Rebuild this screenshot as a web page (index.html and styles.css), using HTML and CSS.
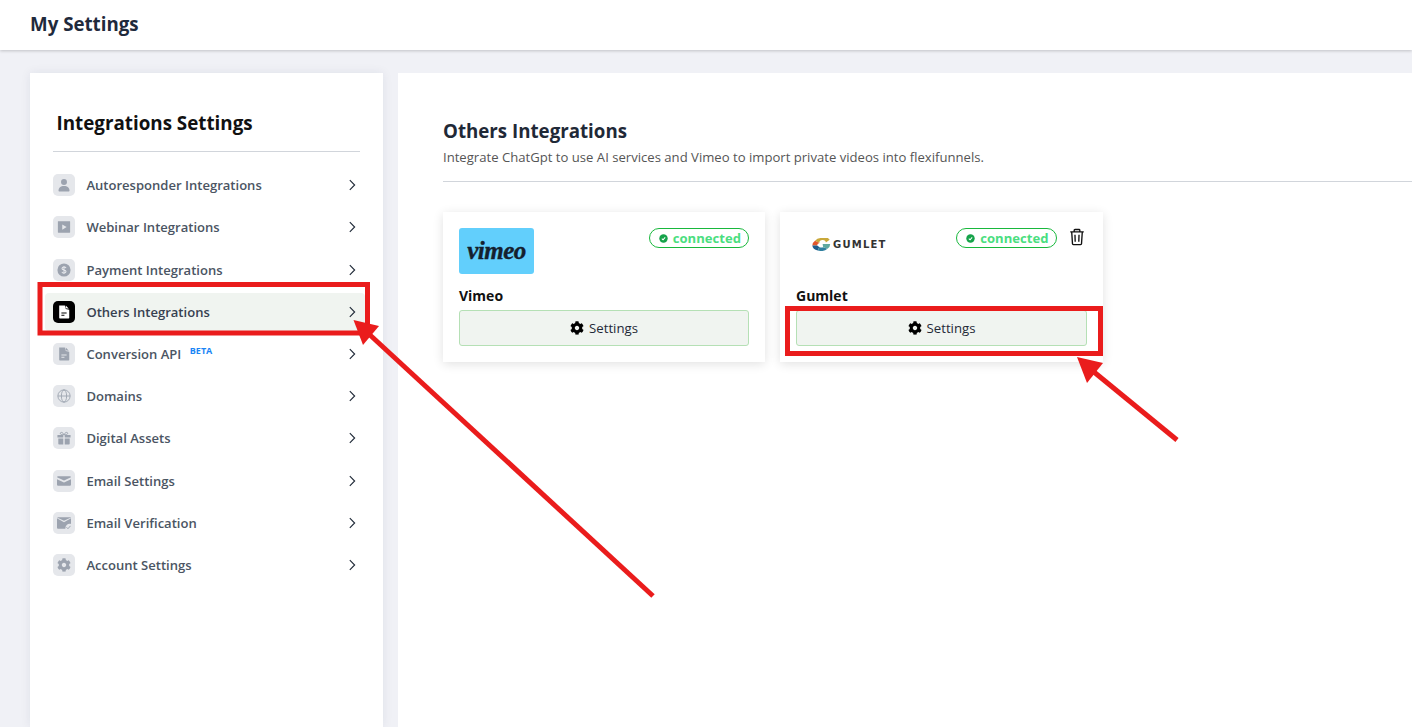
FILE: index.html
```html
<!DOCTYPE html>
<html lang="en">
<head>
    <meta charset="UTF-8">
    <title>My Settings</title>
    <link rel="stylesheet" href="styles.css">
</head>
<body>
<svg class="defs" width="0" height="0">
    <symbol id="gear" viewBox="0 0 512 512"><path d="M487.4 315.7l-42.6-24.6c4.3-23.2 4.3-47 0-70.2l42.6-24.6c4.9-2.8 7.1-8.6 5.5-14-11.1-35.6-30-67.8-54.7-94.6-3.8-4.1-10-5.1-14.8-2.3L380.8 110c-17.9-15.4-38.5-27.3-60.8-35.1V25.8c0-5.6-3.9-10.5-9.4-11.7-36.7-8.2-74.3-7.8-109.2 0-5.5 1.2-9.4 6.1-9.4 11.7V75c-22.2 7.9-42.8 19.8-60.8 35.1L88.7 85.5c-4.9-2.8-11-1.9-14.8 2.3-24.7 26.7-43.6 58.9-54.7 94.6-1.7 5.4.6 11.2 5.5 14L67.3 221c-4.3 23.2-4.3 47 0 70.2l-42.6 24.6c-4.9 2.8-7.1 8.6-5.5 14 11.1 35.6 30 67.8 54.7 94.6 3.8 4.1 10 5.1 14.8 2.3l42.6-24.6c17.9 15.4 38.5 27.3 60.8 35.1v49.2c0 5.6 3.9 10.5 9.4 11.7 36.7 8.2 74.3 7.8 109.2 0 5.5-1.2 9.4-6.1 9.4-11.7v-49.2c22.2-7.9 42.8-19.8 60.8-35.1l42.6 24.6c4.9 2.8 11 1.9 14.8-2.3 24.7-26.7 43.6-58.9 54.7-94.6 1.5-5.5-.7-11.3-5.6-14.1zM256 336c-44.1 0-80-35.9-80-80s35.9-80 80-80 80 35.9 80 80-35.9 80-80 80z"/></symbol>
    <symbol id="doc" viewBox="0 0 16 16"><path d="M2.500 0.500h6.500l1 4 4 1v9c0 .5-.3.8-.8.8H3.300c-.5 0-.8-.3-.8-.8zM10 .7l3.500 3.500-3.500-.5zM5 8.500v1.200h6V8.500zM5 11.200v1.200h3.500v-1.200z" fill-rule="evenodd"/></symbol>
    <symbol id="chev" viewBox="0 0 16 16"><path d="M5.500 2.500 11 8l-5.500 5.500" fill="none" stroke="currentColor" stroke-width="1.300"/></symbol>
    <symbol id="check" viewBox="0 0 16 16"><circle cx="8" cy="8" r="7.500" fill="#16a34a"/><path d="M5 8.200 7.200 10.300 11 6" fill="none" stroke="#fff" stroke-width="1.800"/></symbol>
</svg>

<header class="topbar">My Settings</header>

<div class="page">
    <aside class="sidebar">
        <h2 class="side-title">Integrations Settings</h2>
        <ul class="side-list">
            <li class="side-item">
                <span class="side-icon"><svg viewBox="0 0 16 16"><circle cx="8" cy="4.500" r="3.400"/><path d="M2.500 15.500c-.5 0-.8-.3-.8-.8C1.700 11 4 9 8 9s6.300 2 6.300 5.700c0 .5-.3.8-.8.8z"/></svg></span>
                <span class="side-label">Autoresponder Integrations</span>
                <svg class="chevron"><use href="#chev"/></svg>
            </li>
            <li class="side-item">
                <span class="side-icon"><svg viewBox="0 0 16 16"><path d="M1.500 1.500h13c.3 0 .5.2.5.5v12c0 .3-.2.5-.5.5h-13c-.3 0-.5-.2-.5-.5V2c0-.3.2-.5.500-.5zM6 5v6l5-3z" fill-rule="evenodd"/></svg></span>
                <span class="side-label">Webinar Integrations</span>
                <svg class="chevron"><use href="#chev"/></svg>
            </li>
            <li class="side-item">
                <span class="side-icon"><svg viewBox="0 0 16 16"><circle cx="8" cy="8" r="7.500"/><path d="M10.300 5.800C10 4.900 9.100 4.500 8 4.500c-1.300 0-2.300.6-2.300 1.700 0 2.300 4.600 1.200 4.600 3.500 0 1.100-1 1.800-2.300 1.800-1.200 0-2.100-.5-2.400-1.400M8 3.300v9.400" fill="none" stroke="#e5e7eb" stroke-width="1.200"/></svg></span>
                <span class="side-label">Payment Integrations</span>
                <svg class="chevron"><use href="#chev"/></svg>
            </li>
            <li class="side-item active">
                <span class="side-icon"><svg><use href="#doc"/></svg></span>
                <span class="side-label">Others Integrations</span>
                <svg class="chevron"><use href="#chev"/></svg>
            </li>
            <li class="side-item">
                <span class="side-icon"><svg><use href="#doc"/></svg></span>
                <span class="side-label">Conversion API</span>
                <sup class="beta">BETA</sup>
                <svg class="chevron"><use href="#chev"/></svg>
            </li>
            <li class="side-item">
                <span class="side-icon"><svg viewBox="0 0 16 16" class="line-icon"><circle cx="8" cy="8" r="7"/><ellipse cx="8" cy="8" rx="3" ry="7"/><path d="M1 8h14"/></svg></span>
                <span class="side-label">Domains</span>
                <svg class="chevron"><use href="#chev"/></svg>
            </li>
            <li class="side-item">
                <span class="side-icon"><svg viewBox="0 0 16 16"><path d="M.5 4.500h6.700v3H.5zM8.800 4.500h6.700v3H8.800zM1.500 8.500h5.700v7H2.300c-.5 0-.8-.3-.8-.8zM8.800 8.500h5.700v6.200c0 .5-.3.8-.8.8H8.800z"/><path d="M8 4.200C6.500 1 3.800 1 3.800 2.800 3.800 4 6 4.200 8 4.200c2 0 4.200-.2 4.200-1.400C12.200 1 9.500 1 8 4.200z" fill="none" stroke="#9ca3af" stroke-width="1.100"/></svg></span>
                <span class="side-label">Digital Assets</span>
                <svg class="chevron"><use href="#chev"/></svg>
            </li>
            <li class="side-item">
                <span class="side-icon"><svg viewBox="0 0 16 16"><path d="M1.500 2.500h13c.8 0 1.500.6 1.500 1.300L8 7.500 0 3.800c0-.7.700-1.300 1.500-1.300zM0 6l8 3.700L16 6v6c0 .8-.7 1.500-1.500 1.500h-13C.7 13.500 0 12.800 0 12z"/></svg></span>
                <span class="side-label">Email Settings</span>
                <svg class="chevron"><use href="#chev"/></svg>
            </li>
            <li class="side-item">
                <span class="side-icon"><svg viewBox="0 0 16 16"><path d="M1 1.500h14c.5 0 1 .4 1 1v6.700c-2.800-1-6.500.8-6.500 5.300H1c-.5 0-1-.4-1-1V2.500L8 7l8-4.500-.5-.5L8 5.500.5 2C.5 1.700.5 1.500 1 1.500z"/><path d="M10.800 12.800 12.500 14.500l3-3.300" fill="none" stroke="#9ca3af" stroke-width="1.100"/></svg></span>
                <span class="side-label">Email Verification</span>
                <svg class="chevron"><use href="#chev"/></svg>
            </li>
            <li class="side-item">
                <span class="side-icon"><svg><use href="#gear"/></svg></span>
                <span class="side-label">Account Settings</span>
                <svg class="chevron"><use href="#chev"/></svg>
            </li>
        </ul>
    </aside>

    <main class="content">
        <h3 class="content-title">Others Integrations</h3>
        <p class="content-sub">Integrate ChatGpt to use AI services and Vimeo to import private videos into flexifunnels.</p>
        <div class="cards">
            <section class="card">
                <div class="card-top">
                    <div class="logo vimeo"><span>vimeo</span></div>
                    <span class="badge"><svg><use href="#check"/></svg>connected</span>
                </div>
                <div class="card-name">Vimeo</div>
                <button class="btn"><svg><use href="#gear"/></svg>Settings</button>
            </section>
            <section class="card">
                <div class="card-top">
                    <div class="logo gumlet">
                        <svg viewBox="0 0 18 12">
                            <path d="M17 1.600A6.500 6.500 0 0 0 9 0 6.500 6 0 0 0 3.500 2.500L7.500 4.500A3 2.500 0 0 1 13.500 4.200z" fill="#c9a83a"/>
                            <path d="M3.500 2.500A6 5.500 0 0 0 1 7L5.500 7A3.500 2.500 0 0 1 7.500 4.500z" fill="#e2562b"/>
                            <path d="M1 7A6.500 5 0 0 0 6 11.500L7.500 8.300A3.500 2.500 0 0 1 5.500 7z" fill="#1f5d8c"/>
                            <path d="M6 11.500A8 6 0 0 0 15 10L11 8.500A3.500 2.500 0 0 1 7.500 8.300z" fill="#2f7f9f"/>
                            <path d="M15 10A7 6 0 0 0 17.500 5.500H10.500L11 8.500z" fill="#5fa8a0"/>
                        </svg>
                        <span>GUMLET</span>
                    </div>
                    <span class="badge"><svg><use href="#check"/></svg>connected</span>
                    <svg class="trash" viewBox="0 0 16 16"><path d="M2 3.500h12M5.500 3.500V2c0-.4.3-.7.7-.7h3.600c.4 0 .7.3.7.7v1.500M3.300 3.500l.7 10.600c0 .4.4.7.8.7h6.400c.4 0 .8-.3.8-.7l.7-10.600M6.200 6l.2 6.300M9.800 6l-.2 6.300" fill="none" stroke="#111" stroke-width="1.200"/></svg>
                </div>
                <div class="card-name">Gumlet</div>
                <button class="btn"><svg><use href="#gear"/></svg>Settings</button>
            </section>
        </div>
    </main>
</div>

<!-- red annotations drawn over the screenshot -->
<svg class="marks" viewBox="0 0 1412 727">
    <rect x="40" y="284.500" width="327.500" height="48.500"/>
    <rect x="787.500" y="308.500" width="313" height="45"/>
    <path d="M653 596 370 335"/>
    <path d="M1177 440 1094 372"/>
    <polygon points="353.500,320 379,326 363,345"/>
    <polygon points="1077,357 1103,363 1087,383"/>
</svg>
</body>
</html>
```

FILE: styles.css
```css
* {
    margin: 0;
    padding: 0;
    box-sizing: border-box;
}

html, body {
    height: 100%;
    overflow: hidden;
}

body {
    font-family: "Open Sans", "Liberation Sans", sans-serif;
    background: #f0f1f6;
    color: #111827;
}

.defs {
    position: absolute;
}

.topbar {
    height: 50px;
    padding: 0 30px;
    font-size: 18.720px;
    font-weight: 700;
    line-height: 48px;
    color: #1f2a3c;
    background: #fff;
    box-shadow: 0 1px 3px rgba(0, 0, 0, .2);
}

.page {
    display: flex;
    gap: 15px;
    height: 677px;
    padding: 23px 0 0 30px;
}

.sidebar {
    flex: none;
    width: 353px;
    padding: 36px 23px 0 15px;
    background: #fff;
    box-shadow: 0 0 10px rgba(30, 40, 80, .08);
}

.side-title {
    margin-left: 11.500px;
    padding-bottom: 14px;
    font-size: 18.800px;
    font-weight: 700;
    line-height: 28px;
    color: #111;
}

.side-list {
    position: relative;
    list-style: none;
    margin: 0 -5px 0 0;
    padding-top: 15.080px;
}

.side-list::before {
    content: "";
    position: absolute;
    top: 0;
    left: 8px;
    right: 5px;
    height: 1px;
    background: #d1d5db;
}

.side-item {
    display: flex;
    align-items: center;
    height: 38px;
    margin-bottom: 4.220px;
    padding-left: 8px;
    border-radius: 4px;
    font-size: 13.060px;
    font-weight: 600;
    color: #4b5563;
}

.side-item.active {
    background: #f0f4f0;
    color: #374151;
}

.side-icon {
    display: flex;
    align-items: center;
    justify-content: center;
    flex: none;
    width: 22px;
    height: 22px;
    margin-right: 11.400px;
    border-radius: 5px;
    background: #e5e7eb;
}

.side-icon svg {
    width: 14px;
    height: 14px;
    fill: #9ca3af;
}

.side-icon .line-icon {
    fill: none;
    stroke: #9ca3af;
    stroke-width: 1;
}

.active .side-icon {
    background: #000;
}

.active .side-icon svg {
    fill: #fff;
}

.beta {
    margin: -6px 0 0 8.500px;
    font-size: 9px;
    font-weight: 700;
    line-height: 1;
    color: #1a85f5;
}

.chevron {
    width: 14px;
    height: 14px;
    margin-left: auto;
    margin-right: 6px;
    color: #1f2937;
}

.content {
    flex: 1;
    padding: 45px 0 0 45px;
    background: #fff;
}

.content-title {
    font-size: 18.720px;
    font-weight: 700;
    line-height: 25px;
    color: #1f2937;
}

.content-sub {
    padding: 5px 0 15px;
    border-bottom: 1px solid #d1d5db;
    font-size: 13.120px;
    line-height: 18px;
    color: #555;
}

.cards {
    display: grid;
    grid-template-columns: 322px 323px;
    gap: 15px;
    padding-top: 30px;
}

.card {
    height: 150px;
    padding: 16px;
    background: #fff;
    box-shadow: 0 2px 10px rgba(0, 0, 0, .12);
}

.card-top {
    display: flex;
    align-items: flex-start;
    height: 46px;
}

.logo {
    display: flex;
    align-items: center;
    justify-content: center;
    width: 75px;
    height: 46px;
    border-radius: 3px;
}

.vimeo {
    background: #62cffc;
}

.vimeo span {
    font-family: "Liberation Serif", serif;
    font-size: 25px;
    font-style: italic;
    font-weight: 700;
    letter-spacing: -.5px;
    color: #14202e;
    -webkit-text-stroke: .4px #14202e;
}

.gumlet {
    justify-content: flex-start;
    gap: 2px;
    width: 100px;
    height: 32px;
    padding-left: 15px;
}

.gumlet svg {
    flex: none;
    width: 20px;
    height: 13px;
}

.gumlet span {
    font-family: "DejaVu Sans", sans-serif;
    font-size: 10px;
    font-weight: 700;
    letter-spacing: 1.200px;
    color: #333;
}

.badge {
    display: flex;
    align-items: center;
    gap: 5px;
    height: 20px;
    margin-left: auto;
    padding: 0 7px 0 9px;
    border: 1px solid #18b83c;
    border-radius: 10px;
    font-size: 13.100px;
    font-weight: 700;
    color: #4ade80;
}

.badge svg {
    width: 9px;
    height: 9px;
}

.trash {
    flex: none;
    width: 18px;
    height: 18px;
    margin: 0 1.500px 0 11px;
}

.card-name {
    margin-top: 12px;
    font-size: 14px;
    font-weight: 700;
    line-height: 20px;
    color: #111;
}

.btn {
    display: flex;
    align-items: center;
    justify-content: center;
    gap: 5px;
    width: 100%;
    height: 36px;
    margin-top: 4px;
    border: 1px solid #b5e0b5;
    border-radius: 3px;
    font-family: inherit;
    font-size: 13.200px;
    color: #1f2937;
    background: #f0f4f0;
}

.btn svg {
    width: 14px;
    height: 14px;
    fill: #000;
}

.marks {
    position: absolute;
    top: 0;
    left: 0;
    width: 1412px;
    height: 727px;
    pointer-events: none;
}

.marks rect {
    fill: none;
    stroke: #ea1c1c;
    stroke-width: 5;
}

.marks path {
    fill: none;
    stroke: #ea1c1c;
    stroke-width: 5;
}

.marks polygon {
    fill: #ea1c1c;
}
```
